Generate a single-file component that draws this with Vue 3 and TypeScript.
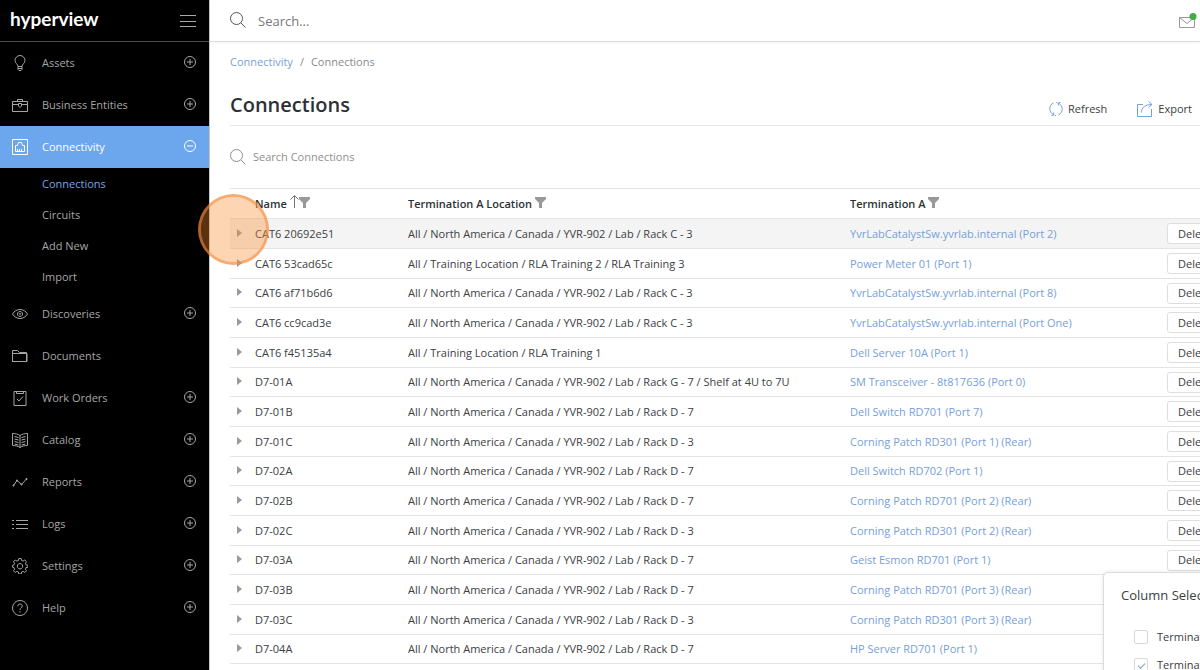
<script setup lang="ts">
import { ref } from 'vue'

interface NavItem {
  label: string
  icon: string
  expandable: boolean
  children?: string[]
}

interface Connection {
  name: string
  location: string
  termination: string
}

const nav: NavItem[] = [
  {
    label: 'Assets',
    icon: 'M6 11.5C6 9 3 8.500 3 5.500a5 5 0 0 1 10 0C13 8.500 10 9 10 11.500ZM6 13.500h4M7 15.500h2M6 11.500v3l1 1h2l1-1v-3',
    expandable: true,
  },
  {
    label: 'Business Entities',
    icon: 'M.5 4.500h15v10H.500ZM5.500 4.500v-2h5v2M.500 7.500h6M9.500 7.500h6M6.500 6.500h3v2.500l-1.500 1.500-1.500-1.500Z',
    expandable: true,
  },
  {
    label: 'Connectivity',
    icon: 'M.5.500h15v15H.500ZM3.500 12.500v-6h2l1-3h3l1 3h2v6ZM5.500 12v-2M7.500 12v-2M9.500 12v-2',
    expandable: true,
    children: ['Connections', 'Circuits', 'Add New', 'Import'],
  },
  {
    label: 'Discoveries',
    icon: 'M.5 8C4 2 12 2 15.500 8 12 14 4 14 .500 8ZM8 5.500a2.500 2.500 0 1 0 .01 0ZM8 7.500a.5.5 0 1 0 .01 0Z',
    expandable: true,
  },
  {
    label: 'Documents',
    icon: 'M.5 13.500v-11h5l2 2h7v9ZM.500 5.500h14.500v8H.500Z',
    expandable: false,
  },
  {
    label: 'Work Orders',
    icon: 'M2 1.500h12v14H2ZM4.500 1.500v2h7v-2M5 9l2 2 4-4.500',
    expandable: true,
  },
  {
    label: 'Catalog',
    icon: 'M8 3.500C6 2 3 1.500.500 1.500v12c2.500 0 5.500.500 7.500 2 2-1.500 5-2 7.500-2v-12C13 1.500 10 2 8 3.500ZM8 3.500v12M2.500 4.500l4 1M2.500 7l4 1M2.500 9.500l4 1M2.500 12l4 1M13.500 4.500l-4 1M13.500 7l-4 1M13.500 9.500l-4 1M13.500 12l-4 1',
    expandable: true,
  },
  {
    label: 'Reports',
    icon: 'M1.500 11.500 5 6.500l4.500 4 5-5.500M1 11h1v1H1ZM4.500 6h1v1h-1ZM9 10h1v1H9ZM14 4.500h1v1h-1Z',
    expandable: true,
  },
  {
    label: 'Logs',
    icon: 'M4 4.500h12M4 8.500h12M4 12.500h12M0 4.500h2M0 8.500h2M0 12.500h2',
    expandable: true,
  },
  {
    label: 'Settings',
    icon: 'M6.800.500h2.400l.4 2 1.500.6 1.700-1.100 1.700 1.700-1.100 1.700.6 1.500 2 .4v1.900l-2 .4-.6 1.500 1.100 1.700-1.700 1.700-1.700-1.100-1.500.6-.4 2H6.800l-.4-2-1.500-.6-1.700 1.100-1.700-1.700 1.100-1.700L2 9.600l-1.500-.4V7.300L2 6.900l.6-1.500-1.100-1.700L3.200 2l1.700 1.100 1.500-.6ZM8 5.500a2.700 2.700 0 1 0 .01 0Z',
    expandable: true,
  },
  {
    label: 'Help',
    icon: 'M8 .500a7.500 7.500 0 1 0 .01 0ZM5.800 6.200C5.800 3.200 10.300 3.300 10.300 6 10.300 7.800 8 7.700 8 9.800M8 11.200v1.300',
    expandable: true,
  },
]

const active = ref('Connectivity')
const activeChild = ref('Connections')
const search = ref('')
const filter = ref('')

const rackC3 = 'All / North America / Canada / YVR-902 / Lab / Rack C - 3'
const rackD3 = 'All / North America / Canada / YVR-902 / Lab / Rack D - 3'
const rackD7 = 'All / North America / Canada / YVR-902 / Lab / Rack D - 7'

const rows: Connection[] = [
  { name: 'CAT6 20692e51', location: rackC3, termination: 'YvrLabCatalystSw.yvrlab.internal (Port 2)' },
  { name: 'CAT6 53cad65c', location: 'All / Training Location / RLA Training 2 / RLA Training 3', termination: 'Power Meter 01 (Port 1)' },
  { name: 'CAT6 af71b6d6', location: rackC3, termination: 'YvrLabCatalystSw.yvrlab.internal (Port 8)' },
  { name: 'CAT6 cc9cad3e', location: rackC3, termination: 'YvrLabCatalystSw.yvrlab.internal (Port One)' },
  { name: 'CAT6 f45135a4', location: 'All / Training Location / RLA Training 1', termination: 'Dell Server 10A (Port 1)' },
  { name: 'D7-01A', location: 'All / North America / Canada / YVR-902 / Lab / Rack G - 7 / Shelf at 4U to 7U', termination: 'SM Transceiver - 8t817636 (Port 0)' },
  { name: 'D7-01B', location: rackD7, termination: 'Dell Switch RD701 (Port 7)' },
  { name: 'D7-01C', location: rackD3, termination: 'Corning Patch RD301 (Port 1) (Rear)' },
  { name: 'D7-02A', location: rackD7, termination: 'Dell Switch RD702 (Port 1)' },
  { name: 'D7-02B', location: rackD7, termination: 'Corning Patch RD701 (Port 2) (Rear)' },
  { name: 'D7-02C', location: rackD3, termination: 'Corning Patch RD301 (Port 2) (Rear)' },
  { name: 'D7-03A', location: rackD7, termination: 'Geist Esmon RD701 (Port 1)' },
  { name: 'D7-03B', location: rackD7, termination: 'Corning Patch RD701 (Port 3) (Rear)' },
  { name: 'D7-03C', location: rackD3, termination: 'Corning Patch RD301 (Port 3) (Rear)' },
  { name: 'D7-04A', location: rackD7, termination: 'HP Server RD701 (Port 1)' },
]

const columns = ref([
  { label: 'Termination A Type', shown: false },
  { label: 'Termination A', shown: true },
])
</script>

<template>
  <div class="app">
    <aside class="sidebar">
      <div class="brand">
        <a class="logo" href="#">hyperview</a>
        <button class="menu" type="button" aria-label="Toggle menu">
          <svg width="16" height="14" viewBox="0 0 16 14"><path d="M0 1.500h16M0 7.500h16M0 12.500h16" /></svg>
        </button>
      </div>
      <nav>
        <template v-for="item in nav" :key="item.label">
          <a class="nav-item" :class="{ active: item.label === active }" href="#">
            <svg class="nav-icon" width="16" height="16" viewBox="0 0 16 16"><path :d="item.icon" /></svg>
            <span>{{ item.label }}</span>
            <svg v-if="item.expandable" class="toggle" width="12" height="12" viewBox="0 0 12 12">
              <circle cx="6" cy="6" r="5.500" />
              <path :d="item.children ? 'M3 6h6' : 'M3 6h6M6 3v6'" />
            </svg>
          </a>
          <div v-if="item.children" class="subnav">
            <a
              v-for="child in item.children"
              :key="child"
              href="#"
              :class="{ current: child === activeChild }"
            >{{ child }}</a>
          </div>
        </template>
      </nav>
    </aside>

    <div class="main">
      <header class="topbar">
        <label class="global-search">
          <svg width="16" height="16" viewBox="0 0 16 16"><circle cx="6.500" cy="6.500" r="6" /><path d="m11 11 4.500 4.500" /></svg>
          <input v-model="search" type="text" placeholder="Search..." aria-label="Search" />
        </label>
        <button class="mail" type="button" aria-label="Messages">
          <svg width="18" height="16" viewBox="0 0 18 16">
            <path d="M.5 4.500h15v10H.500ZM.500 4.500l7.500 6 7.500-6" />
            <circle cx="14" cy="3.500" r="3.500" />
          </svg>
        </button>
      </header>

      <main class="content">
        <div class="breadcrumb">
          <a href="#">Connectivity</a><span>/</span><span>Connections</span>
        </div>
        <div class="heading">
          <h1>Connections</h1>
          <div class="actions">
            <button type="button">
              <svg width="14" height="16" viewBox="0 0 14 16"><path d="M4.500 13.800C-.5 11-.5 4 4.500 2M9.500 2C14.500 5 14.500 11.500 9.500 14M2.500 14.500l2.500-.5-.5-2.500M11.500 1.500 9 2l.5 2.500M6 14.500h1M7 1.500h1" /></svg>
              Refresh
            </button>
            <button type="button">
              <svg width="16" height="16" viewBox="0 0 16 16"><path d="M6 3.500H.500v12h14V8M4.500 11.500C4.500 6.500 8 3.500 15 3.500M11.500.500l3.500 3-3.500 3" /></svg>
              Export
            </button>
          </div>
        </div>
        <label class="table-search">
          <svg width="16" height="16" viewBox="0 0 16 16"><circle cx="6.500" cy="6.500" r="6" /><path d="m11 11 4.500 4.500" /></svg>
          <input v-model="filter" type="text" placeholder="Search Connections" aria-label="Search Connections" />
        </label>

        <table>
          <colgroup>
            <col class="c-expand" /><col class="c-name" /><col class="c-location" /><col class="c-term" /><col />
          </colgroup>
          <thead>
            <tr>
              <th></th>
              <th>
                Name
                <svg class="sort" width="9" height="13" viewBox="0 0 9 13"><path d="M4.500 13V1M.5 4.500l4-4 4 4" /></svg>
                <svg class="funnel" width="11" height="11" viewBox="0 0 11 11"><path d="M0 0h11v2L7 6v5H4V6L0 2Z" /></svg>
              </th>
              <th>Termination A Location <svg class="funnel" width="11" height="11" viewBox="0 0 11 11"><path d="M0 0h11v2L7 6v5H4V6L0 2Z" /></svg></th>
              <th>Termination A <svg class="funnel" width="11" height="11" viewBox="0 0 11 11"><path d="M0 0h11v2L7 6v5H4V6L0 2Z" /></svg></th>
              <th></th>
            </tr>
          </thead>
          <tbody>
            <tr v-for="row in rows" :key="row.name">
              <td>
                <button class="expander" type="button" :aria-label="'Expand ' + row.name">
                  <svg width="5" height="8" viewBox="0 0 5 8"><path d="M0 0 5 4 0 8Z" /></svg>
                </button>
              </td>
              <td>{{ row.name }}</td>
              <td>{{ row.location }}</td>
              <td><a href="#">{{ row.termination }}</a></td>
              <td><button class="delete" type="button">Delete</button></td>
            </tr>
          </tbody>
        </table>
      </main>
    </div>

    <section class="selector">
      <h2>Column Selector</h2>
      <label v-for="column in columns" :key="column.label">
        <input v-model="column.shown" type="checkbox" />
        <span>{{ column.label }}</span>
      </label>
    </section>
    <div class="pointer"></div>
  </div>
</template>

<style>
body {
  margin: 0;
}
</style>

<style scoped>
.app {
  position: relative;
  display: flex;
  height: 100vh;
  overflow: hidden;
  background: #fff;
  color: #3c4043;
  font: 11px/18px "Open Sans", "Noto Sans", sans-serif;
}
.app * {
  box-sizing: border-box;
}
a {
  color: #76a0da;
  text-decoration: none;
}
button {
  padding: 0;
  border: 0;
  background: none;
  color: inherit;
  font: inherit;
}
svg {
  display: block;
  flex: none;
  fill: none;
  stroke: currentColor;
}
input[type="text"] {
  flex: 1;
  min-width: 0;
  padding: 0;
  border: 0;
  outline: 0;
  background: none;
  color: inherit;
  font: inherit;
}
input::placeholder {
  color: inherit;
  opacity: 1;
}

/* Sidebar */
.sidebar {
  flex: none;
  width: 210px;
  border-right: 1px solid #c4c4c4;
  background: #000;
}
.brand {
  display: flex;
  align-items: center;
  justify-content: space-between;
  height: 42px;
  padding: 0 13px 0 10px;
  border-bottom: 1px solid #4c4c4c;
}
.logo {
  padding-bottom: 4px;
  color: #fff;
  font: 700 19px/24px Lato, sans-serif;
}
.menu {
  color: #a8a8a8;
}
.nav-item {
  display: flex;
  align-items: center;
  height: 42px;
  padding: 0 13px 0 12px;
  color: #a6a6a6;
}
.nav-icon {
  margin-right: 14px;
}
.toggle {
  margin: 0 0 2px auto;
}
.nav-item.active {
  background: #6ca6ec;
  color: #fff;
}
.subnav {
  padding-bottom: 1px;
}
.subnav a {
  display: block;
  padding-left: 42px;
  color: #a6a6a6;
  line-height: 31px;
}
.subnav .current {
  color: #76a6e8;
}

/* Top bar */
.main {
  flex: 1;
  min-width: 0;
}
.topbar {
  display: flex;
  align-items: center;
  justify-content: space-between;
  height: 42px;
  padding: 0 3px 0 20px;
  border-bottom: 1px solid #dcdcdc;
  box-shadow: 0 1px 2px #0000000d;
}
.global-search {
  display: flex;
  flex: 1;
  gap: 12px;
  color: #777;
  font-size: 13px;
}
.global-search svg {
  color: #555;
}
.mail {
  color: #999;
}
.mail circle {
  fill: #3fae49;
  stroke: none;
}

/* Page heading */
.content {
  padding-left: 20px;
}
.breadcrumb {
  display: flex;
  gap: 7px;
  padding-top: 11px;
  color: #8a8a8a;
}
.heading {
  display: flex;
  align-items: flex-end;
  justify-content: space-between;
  height: 55px;
  padding: 0 8px 7px 0;
  border-bottom: 1px solid #e6e6e6;
}
h1 {
  margin: 0;
  color: #2d3136;
  font-size: 20px;
  font-weight: 600;
  line-height: 26px;
}
.actions {
  display: flex;
  gap: 30px;
}
.actions button {
  display: flex;
  align-items: center;
  gap: 5px;
}
.actions svg {
  color: #76a0da;
}
.table-search {
  display: flex;
  align-items: center;
  gap: 7px;
  height: 62px;
  color: #8f8f8f;
}

/* Table */
table {
  width: 100%;
  border-collapse: collapse;
  border-top: 1px solid #e4e4e4;
  table-layout: fixed;
}
.c-expand {
  width: 25px;
}
.c-name {
  width: 153px;
}
.c-location {
  width: 442px;
}
.c-term {
  width: 317px;
}
tr {
  height: 30px;
  border-bottom: 1px solid #e4e4e4;
}
tbody tr:nth-child(3n) {
  height: 29px;
}
tbody tr:first-child {
  background: #f4f4f4;
}
th,
td {
  padding: 0;
  overflow: hidden;
  text-align: left;
  white-space: nowrap;
}
th {
  color: #2d3136;
  font-weight: 600;
}
th svg {
  display: inline-block;
}
.sort {
  color: #777;
}
.funnel {
  fill: #999;
  stroke: none;
}
.expander {
  display: block;
  padding: 0 7px 2px;
}
.expander svg {
  fill: #999;
  stroke: none;
}
.delete {
  display: block;
  height: 21px;
  padding: 0 10px;
  border: 1px solid #dedede;
  border-radius: 3px;
  background: #fff;
  line-height: 18px;
}

/* Column selector panel, running off the lower right corner */
.selector {
  position: absolute;
  top: 572px;
  right: -119px;
  width: 216px;
  padding: 12px 17px 20px;
  border: 1px solid #dcdcdc;
  border-radius: 5px;
  background: #fff;
  box-shadow: 0 0 4px #0000001a;
}
h2 {
  margin: 0 0 18px;
  font-size: 13px;
  font-weight: 400;
  line-height: 20px;
}
.selector label {
  display: flex;
  align-items: center;
  gap: 9px;
  height: 28px;
  padding-left: 13px;
  white-space: nowrap;
}
.selector input {
  display: grid;
  width: 14px;
  height: 14px;
  margin: 0;
  place-items: center;
  border: 1px solid #d8d8d8;
  border-radius: 2px;
  appearance: none;
}
.selector input:checked::after {
  width: 6px;
  height: 3px;
  border: solid #76a0da;
  border-width: 0 0 1px 1px;
  content: "";
  transform: rotate(-45deg);
}

/* Click highlight */
.pointer {
  position: absolute;
  top: 194px;
  left: 198px;
  width: 71px;
  height: 71px;
  border: 3px solid #f48b3ab8;
  border-radius: 50%;
  background: #fa8a2c5c padding-box;
  pointer-events: none;
}
</style>
